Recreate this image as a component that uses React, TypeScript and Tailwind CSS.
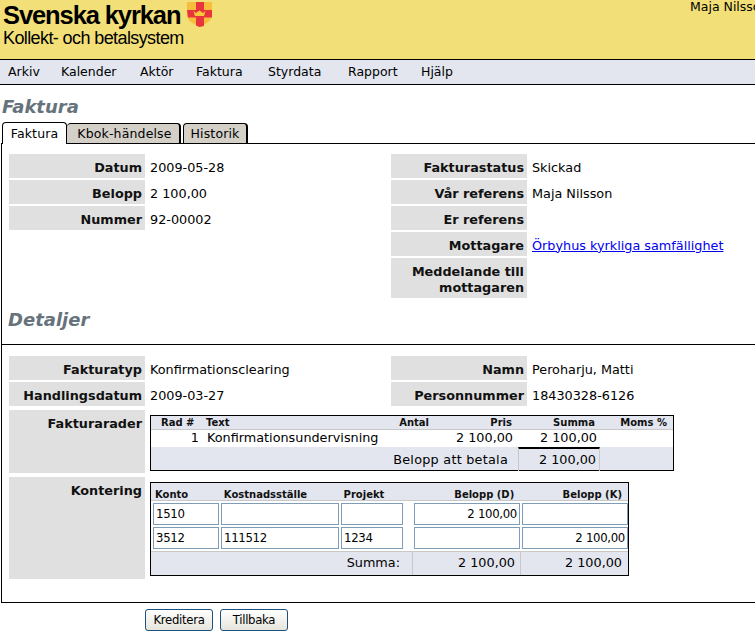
const font = "font-['DejaVu_Sans',Verdana,sans-serif]";

function Row({ label, value, h = "h-6", link }: { label: string; value?: string; h?: string; link?: boolean }) {
  return (
    <div className="flex">
      <div className={`w-[136px] ${h} bg-[#e0e0e0] pr-[3px] pt-[5.500px] text-right font-bold text-[12.8px] leading-[16px] text-[#111]`}>{label}</div>
      <div className="pl-[5px] pt-[5.500px] text-[12.8px] leading-[16px] whitespace-nowrap">
        {link ? <a href="#" className="text-[#0000ee] underline">{value}</a> : value}
      </div>
    </div>
  );
}

function Input({ w, value, right }: { w: string; value?: string; right?: boolean }) {
  return (
    <div className={`${w} h-[22px] shrink-0 border border-[#7f9db9] bg-white px-[2px] font-['DejaVu_Sans_Condensed','DejaVu_Sans',sans-serif] text-[13px] leading-[20px] tracking-[-0.3px] ${right ? "text-right" : ""}`}>{value}</div>
  );
}

const th = "font-bold text-[10px] leading-[13px] text-[#111]";

export default function App() {
  return (
    <div className={`${font} w-[755px] h-[634px] overflow-hidden bg-white text-black`}>
      <header className="flex h-[60px] bg-[#f3df78] border-b border-black">
        <div className="w-[690px] shrink-0 pl-[3px] flex flex-col">
          <div className="flex items-start">
            <div className="font-['Liberation_Sans',sans-serif] font-bold text-[25.5px] leading-[30px] tracking-[-1.1px] w-[184px] whitespace-nowrap">Svenska kyrkan</div>
            <svg width="25" height="25" viewBox="0 0 25 25" className="mt-[2px]">
              <path d="M0 0H25V13C25 19 18 22 12.500 25C7 22 0 19 0 13Z" fill="#f8bd3c" />
              <path d="M9 0H17V8H25V15.500H17V24L12.500 25L9 23.500V15.500H1L0 8H9Z" fill="#e8343c" />
              <path d="M6.500 9L9 11L12.500 8.500L16 11L18.500 9L17 14H8Z" fill="#f6c93a" />
            </svg>
          </div>
          <div className="font-['Liberation_Sans',sans-serif] text-[18px] leading-[20px] tracking-[-0.6px] -mt-[2px] whitespace-nowrap">Kollekt- och betalsystem</div>
        </div>
        <div className="text-[12.5px] leading-[13px] whitespace-nowrap">Maja Nilsson</div>
      </header>

      <nav className="flex h-[25px] items-center border-b border-black bg-[#e3e6ef] pl-[8px] text-[12.5px]">
        <span className="w-[53px]">Arkiv</span>
        <span className="w-[79px]">Kalender</span>
        <span className="w-[56px]">Aktör</span>
        <span className="w-[72px]">Faktura</span>
        <span className="w-[80px]">Styrdata</span>
        <span className="w-[73px]">Rapport</span>
        <span>Hjälp</span>
      </nav>

      <h1 className="pl-[2px] mt-[10px] h-[24px] text-[18px] leading-[24px] font-bold italic text-[#66737c]">Faktura</h1>

      <div className="flex h-[21px] pl-[2px] mt-[3px] text-[12.5px] leading-[18px] tracking-[0.15px] relative z-10">
        <div className="w-[65px] h-[22px] rounded-t-[4px] border-t border-l border-r border-black bg-white text-center pt-[2px]">Faktura</div>
        <div className="w-[114px] h-[20px] mt-[1px] rounded-t-[4px] border-t border-r-2 border-black bg-[#d4d0c8] text-center pl-[3px] pt-[1px]">Kbok-händelse</div>
        <div className="w-[65px] h-[20px] mt-[1px] ml-[2px] rounded-t-[4px] border-t border-l border-r-2 border-black bg-[#d4d0c8] text-center pt-[1px]">Historik</div>
      </div>

      <main className="ml-[1px] h-[460px] border-t border-l border-b border-black pl-[7px] pt-[10px]">
        <div className="grid grid-cols-[382px_1fr]">
          <div className="flex flex-col gap-[2px]">
            <Row label="Datum" value="2009-05-28" />
            <Row label="Belopp" value="2 100,00" />
            <Row label="Nummer" value="92-00002" />
          </div>
          <div className="flex flex-col gap-[2px]">
            <Row label="Fakturastatus" value="Skickad" />
            <Row label="Vår referens" value="Maja Nilsson" />
            <Row label="Er referens" />
            <Row label="Mottagare" value="Örbyhus kyrkliga samfällighet" link />
            <Row label="Meddelande till mottagaren" h="h-[40px]" />
          </div>
        </div>

        <h2 className="mt-[10px] h-[36px] -ml-[1px] text-[18px] leading-[24px] font-bold italic text-[#66737c]">Detaljer</h2>
        <div className="-ml-[7px] border-t border-black" />

        <div className="mt-[11px] grid grid-cols-[382px_1fr]">
          <div className="flex flex-col gap-[2px]">
            <Row label="Fakturatyp" value="Konfirmationsclearing" />
            <Row label="Handlingsdatum" value="2009-03-27" />
          </div>
          <div className="flex flex-col gap-[2px]">
            <Row label="Namn" value="Peroharju, Matti" />
            <Row label="Personnummer" value="18430328-6126" />
          </div>
        </div>

        <div className="mt-[4px] flex">
          <div className="w-[136px] h-[63px] bg-[#e0e0e0] pr-[3px] pt-[5.500px] text-right font-bold text-[12.8px] leading-[16px] text-[#111]">Fakturarader</div>
          <div className="ml-[5px] mt-[5px] w-[524px] h-[56px] border border-black bg-white text-[12.8px]">
            <div className="grid grid-cols-[52px_145px_85px_85px_82px_73px] h-[14px] bg-[#e3e6ef] border-b border-[#c8c8c8]">
              <div className={`${th} pl-[10px] whitespace-nowrap`}>Rad #</div>
              <div className={`${th} pl-[3px]`}>Text</div>
              <div className={`${th} text-right pr-[4px]`}>Antal</div>
              <div className={`${th} text-right pr-[6px]`}>Pris</div>
              <div className={`${th} text-right pr-[5px]`}>Summa</div>
              <div className={`${th} text-right pr-[6px] whitespace-nowrap`}>Moms %</div>
            </div>
            <div className="grid grid-cols-[52px_145px_85px_85px_82px_73px] h-[17px] leading-[16px]">
              <div className="text-right pr-[4px]">1</div>
              <div className="pl-[4px] whitespace-nowrap">Konfirmationsundervisning</div>
              <div />
              <div className="text-right pr-[5px]">2 100,00</div>
              <div className="text-right pr-[3px]">2 100,00</div>
              <div />
            </div>
            <div className="grid grid-cols-[367px_82px_73px] h-[23px] bg-[#e3e6ef] leading-[22px]">
              <div className="whitespace-nowrap text-right pr-[10px] pt-[2px] tracking-[0.25px]">Belopp att betala</div>
              <div className="border-t-2 border-black border-l border-r border-l-[#c8c8c8] border-r-[#c8c8c8] text-right pr-[3px]">2 100,00</div>
              <div />
            </div>
          </div>
        </div>

        <div className="mt-[4px] flex">
          <div className="w-[136px] h-[102px] bg-[#e0e0e0] pr-[3px] pt-[5.500px] text-right font-bold text-[12.8px] leading-[16px] text-[#111]">Kontering</div>
          <div className="ml-[5px] mt-[5px] w-[479px] h-[94px] border border-black bg-white">
            <div className="flex h-[18px] bg-[#e3e6ef] border-b border-[#c8c8c8] pt-[5px]">
              <div className={`${th} w-[68px] pl-[4px]`}>Konto</div>
              <div className={`${th} w-[120px] pl-[5px]`}>Kostnadsställe</div>
              <div className={`${th} w-[60px] pl-[5px]`}>Projekt</div>
              <div className={`${th} w-[121px] text-right pr-[5px] whitespace-nowrap`}>Belopp (D)</div>
              <div className={`${th} w-[109px] text-right pr-[6px] whitespace-nowrap`}>Belopp (K)</div>
            </div>
            <div className="flex flex-col gap-[2px] pl-[2px] pt-[2px]">
              <div className="flex gap-[2px]">
                <Input w="w-[66px]" value="1510" />
                <Input w="w-[118px]" />
                <Input w="w-[62px]" />
                <Input w="w-[106px] ml-[9px]" value="2 100,00" right />
                <Input w="w-[106px]" />
              </div>
              <div className="flex gap-[2px]">
                <Input w="w-[66px]" value="3512" />
                <Input w="w-[118px]" value="111512" />
                <Input w="w-[62px]" value="1234" />
                <Input w="w-[106px] ml-[9px]" />
                <Input w="w-[106px]" value="2 100,00" right />
              </div>
            </div>
            <div className="mt-[2px] flex h-[24px] bg-[#e3e6ef] border-t border-[#c8c8c8] text-[12.8px] leading-[22px]">
              <div className="w-[261px] text-right pr-[12px]">Summa:</div>
              <div className="w-[108px] border-l border-[#c8c8c8] text-right pr-[5px]">2 100,00</div>
              <div className="w-[108px] border-l border-[#c8c8c8] text-right pr-[6px]">2 100,00</div>
            </div>
          </div>
        </div>
      </main>

      <div className="mt-[6px] flex gap-[7px] pl-[145px]">
        {["Kreditera", "Tillbaka"].map((t) => (
          <button key={t} className="w-[68px] h-[22px] rounded-[3px] border border-[#1c5180] bg-gradient-to-b from-white to-[#e6e5dc] font-['DejaVu_Sans_Condensed','DejaVu_Sans',sans-serif] text-[13px] leading-[18px] tracking-[-0.3px]">{t}</button>
        ))}
      </div>
    </div>
  );
}
